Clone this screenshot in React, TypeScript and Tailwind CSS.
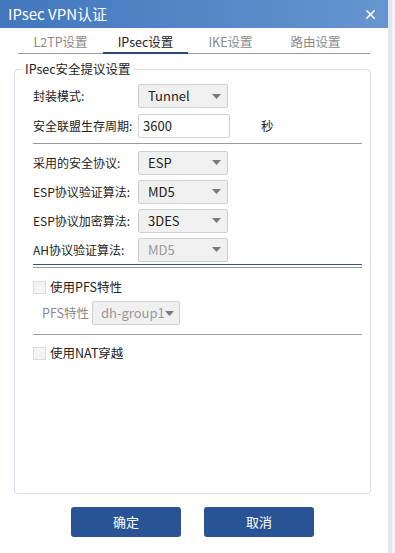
import { X } from 'lucide-react';

const FONT = { fontFamily: '"Noto Sans CJK SC", "Noto Sans", sans-serif' };

const TABS = ['L2TP设置', 'IPsec设置', 'IKE设置', '路由设置'];

function Caret() {
  return (
    <svg width="9" height="5" viewBox="0 0 9 5" className="shrink-0" aria-hidden>
      <path d="M0 0h9L4.5 5z" fill="#7a7a7a" />
    </svg>
  );
}

function Select({
  value,
  disabled = false,
  width = 'w-[90px]',
  pad = 'pl-[9px] pr-[6px]',
}: {
  value: string;
  disabled?: boolean;
  width?: string;
  pad?: string;
}) {
  return (
    <div
      className={`flex h-[24px] ${width} ${pad} items-center justify-between whitespace-nowrap rounded-[2px] border border-[#d0d0d0] bg-[#f0f0f0] text-[13px] leading-[22px] ${
        disabled ? 'text-[#999]' : 'text-[#222]'
      }`}
    >
      <span>{value}</span>
      <Caret />
    </div>
  );
}

function Row({ label, children }: { label: string; children: React.ReactNode }) {
  return (
    <div className="flex h-[29px] items-center">
      <span className="w-[105px] shrink-0 whitespace-nowrap text-[12px] leading-[18px] text-[#222]">{label}</span>
      {children}
    </div>
  );
}

function Check({ label }: { label: string }) {
  return (
    <div className="flex h-[24px] items-center gap-[4px]">
      <span className="size-[13px] border border-[#dcdcdc] bg-[#f4f4f4]" />
      <span className="whitespace-nowrap text-[12.5px] leading-[18px] text-[#222]">{label}</span>
    </div>
  );
}

export default function App() {
  return (
    <div className="flex h-[553px] w-[395px] bg-white" style={FONT}>
      <div className="flex w-[388px] flex-col bg-white">
        {/* 标题栏 */}
        <div className="flex h-[28px] items-center justify-between bg-gradient-to-r from-[#4277bd] to-[#6695cf] pl-[8px] pr-[10px] text-white">
          <span className="text-[15px] leading-[20px]">IPsec VPN认证</span>
          <X className="size-[15px]" strokeWidth={2.5} />
        </div>

        {/* 选项卡 */}
        <div className="mx-[18px] mt-[5px] flex h-[21px] border-b border-[#9a9a9a]">
          {TABS.map((t, i) => (
            <div
              key={t}
              className={`-mb-px flex w-[85px] items-start justify-center text-[12.5px] leading-[18px] ${
                i === 1 ? 'border-b-2 border-[#2d4b77] text-[#222]' : 'text-[#8a8a8a]'
              }`}
            >
              {t}
            </div>
          ))}
        </div>

        {/* 安全提议设置 */}
        <fieldset className="ml-[14px] mt-[6px] h-[434px] w-[357px] rounded-[4px] border border-[#d6dce4] pl-[18px] pr-[8px]">
          <legend className="ml-[-11px] px-[3px] text-[12.5px] leading-[18px] text-[#222]">IPsec安全提议设置</legend>

          <div className="mt-[3px] flex flex-col">
            <div className="flex h-[30px] items-center">
              <span className="w-[105px] shrink-0 whitespace-nowrap text-[12px] leading-[18px] text-[#222]">封装模式:</span>
              <Select value="Tunnel" />
            </div>
            <div className="flex h-[30px] items-center">
              <span className="w-[105px] shrink-0 whitespace-nowrap text-[12px] leading-[18px] text-[#222]">
                安全联盟生存周期:
              </span>
              <div className="flex h-[24px] w-[92px] items-center rounded-[2px] border border-[#d0d0d0] bg-white pl-[4px] text-[13px] text-[#222]">
                3600
              </div>
              <span className="ml-[31px] text-[12.5px] leading-[18px] text-[#222]">秒</span>
            </div>
            <div className="mt-[2px] h-px bg-[#9a9a9a]" />

            <div className="mt-[4px]">
              <Row label="采用的安全协议:">
                <Select value="ESP" />
              </Row>
              <Row label="ESP协议验证算法:">
                <Select value="MD5" />
              </Row>
              <Row label="ESP协议加密算法:">
                <Select value="3DES" />
              </Row>
              <Row label="AH协议验证算法:">
                <Select value="MD5" disabled />
              </Row>
            </div>
            <div className="h-px bg-[#3a5578]" />
            <div className="mt-[2px] h-px bg-[#9a9a9a]" />

            <div className="mt-[7px]">
              <Check label="使用PFS特性" />
            </div>
            <div className="mt-[2px] flex h-[24px] items-center pl-[9px]">
              <span className="w-[50px] whitespace-nowrap text-[12.5px] leading-[18px] text-[#8a8a8a]">PFS特性</span>
              <Select value="dh-group1" disabled width="w-[88px]" pad="pl-[8px] pr-[5px]" />
            </div>
            <div className="mt-[9px] h-px bg-[#9a9a9a]" />
            <div className="mt-[6px]">
              <Check label="使用NAT穿越" />
            </div>
          </div>
        </fieldset>

        {/* 按钮 */}
        <div className="mt-[13px] flex gap-[23px] pl-[71px]">
          <button className="h-[30px] w-[110px] rounded-[3px] bg-[#285496] text-[13px] text-white">确定</button>
          <button className="h-[30px] w-[110px] rounded-[3px] bg-[#285496] text-[13px] text-white">取消</button>
        </div>
      </div>

      {/* 右侧滚动条区域 */}
      <div className="flex w-[7px] bg-[#f2f4f8]">
        <div className="w-[4px] bg-[#dfe7f3]" />
      </div>
    </div>
  );
}
